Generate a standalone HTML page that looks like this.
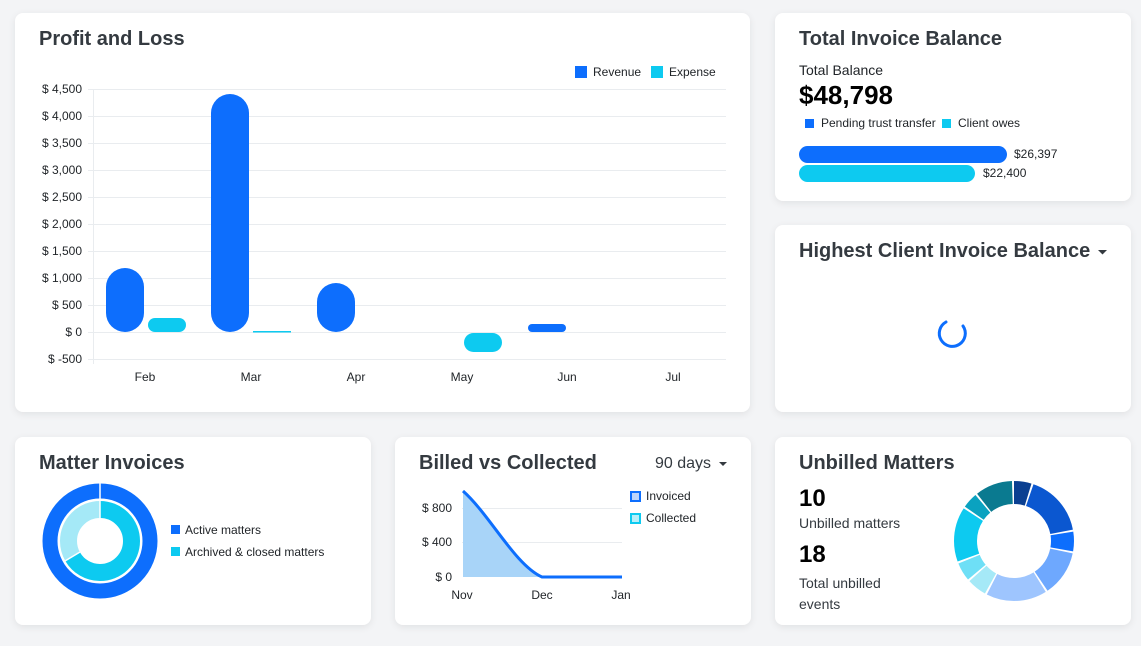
<!DOCTYPE html>
<html><head><meta charset="utf-8"><style>
*{margin:0;padding:0;box-sizing:border-box}
body{width:1141px;height:646px;background:#f3f4f6;font-family:"Liberation Sans",Arial,sans-serif;position:relative;overflow:hidden;color:#212529}
.card{position:absolute;background:#fff;border-radius:8px;box-shadow:0 2px 8px rgba(0,0,0,.08)}
.t{position:absolute;font-size:20px;font-weight:bold;color:#343a40}
svg{position:absolute;left:0;top:0}
.s{font-size:12px;fill:#212529}
</style></head><body>
<div class="card" style="left:15px;top:13px;width:735px;height:399px"></div>
<div class="card" style="left:775px;top:13px;width:356px;height:188px"></div>
<div class="card" style="left:775px;top:225px;width:356px;height:187px"></div>
<div class="card" style="left:15px;top:437px;width:356px;height:188px"></div>
<div class="card" style="left:395px;top:437px;width:356px;height:188px"></div>
<div class="card" style="left:775px;top:437px;width:356px;height:188px"></div>

<div class="t" style="left:39px;top:28px">Profit and Loss</div>
<div class="t" style="left:799px;top:28px">Total Invoice Balance</div>
<div class="t" style="left:799px;top:240px">Highest Client Invoice Balance</div>
<div class="t" style="left:39px;top:452px">Matter Invoices</div>
<div class="t" style="left:419px;top:452px">Billed vs Collected</div>
<div class="t" style="left:799px;top:452px">Unbilled Matters</div>
<div style="position:absolute;left:655px;top:455px;font-size:16px;color:#343a40">90 days</div>
<div style="position:absolute;left:799px;top:62px;font-size:14px">Total Balance</div>
<div style="position:absolute;left:799px;top:80px;font-size:26px;font-weight:bold;color:#000">$48,798</div>
<div style="position:absolute;left:799px;top:485px;font-size:24px;font-weight:bold;color:#000">10</div>
<div style="position:absolute;left:799px;top:515px;font-size:14px;color:#343a40">Unbilled matters</div>
<div style="position:absolute;left:799px;top:541px;font-size:24px;font-weight:bold;color:#000">18</div>
<div style="position:absolute;left:799px;top:573px;font-size:14px;color:#343a40;line-height:21px">Total unbilled<br>events</div>

<svg width="1141" height="646">
<g stroke="#e9ecef" stroke-width="1">
<line x1="88" y1="89.5" x2="726" y2="89.5"/><line x1="88" y1="116.5" x2="726" y2="116.5"/><line x1="88" y1="143.5" x2="726" y2="143.5"/><line x1="88" y1="170.5" x2="726" y2="170.5"/><line x1="88" y1="197.5" x2="726" y2="197.5"/><line x1="88" y1="224.5" x2="726" y2="224.5"/><line x1="88" y1="251.5" x2="726" y2="251.5"/><line x1="88" y1="278.5" x2="726" y2="278.5"/><line x1="88" y1="305.5" x2="726" y2="305.5"/><line x1="88" y1="332.5" x2="726" y2="332.5"/><line x1="88" y1="359.5" x2="726" y2="359.5"/><line x1="93.5" y1="89" x2="93.5" y2="364"/>
</g>
<g text-anchor="end">
<text x="82" y="93" class="s">$ 4,500</text><text x="82" y="120" class="s">$ 4,000</text><text x="82" y="147" class="s">$ 3,500</text><text x="82" y="174" class="s">$ 3,000</text><text x="82" y="201" class="s">$ 2,500</text><text x="82" y="228" class="s">$ 2,000</text><text x="82" y="255" class="s">$ 1,500</text><text x="82" y="282" class="s">$ 1,000</text><text x="82" y="309" class="s">$ 500</text><text x="82" y="336" class="s">$ 0</text><text x="82" y="363" class="s">$ -500</text>
</g>
<g text-anchor="middle"><text x="145" y="381" class="s">Feb</text><text x="251" y="381" class="s">Mar</text><text x="356" y="381" class="s">Apr</text><text x="462" y="381" class="s">May</text><text x="567" y="381" class="s">Jun</text><text x="673" y="381" class="s">Jul</text></g>
<rect x="106" y="268" width="38" height="64" rx="19" fill="#0d6efd"/>
<rect x="148" y="318" width="38" height="14" rx="7" fill="#0dcaf0"/>
<rect x="211" y="94" width="38" height="238" rx="19" fill="#0d6efd"/>
<rect x="253" y="331" width="38" height="1.5" fill="#0dcaf0"/>
<rect x="317" y="283" width="38" height="49" rx="19" fill="#0d6efd"/>
<rect x="464" y="333" width="38" height="19" rx="9.5" fill="#0dcaf0"/>
<rect x="528" y="324" width="38" height="8" rx="4" fill="#0d6efd"/>
<rect x="575" y="66" width="12" height="12" fill="#0d6efd"/><text x="593" y="76" class="s">Revenue</text>
<rect x="651" y="66" width="12" height="12" fill="#0dcaf0"/><text x="669" y="76" class="s">Expense</text>

<rect x="805" y="119" width="9" height="9" fill="#0d6efd"/><text x="821" y="127" class="s">Pending trust transfer</text>
<rect x="942" y="119" width="9" height="9" fill="#0dcaf0"/><text x="958" y="127" class="s">Client owes</text>
<rect x="799" y="146" width="208" height="17" rx="8.5" fill="#0d6efd"/><text x="1014" y="158" class="s">$26,397</text>
<rect x="799" y="165" width="176" height="17" rx="8.5" fill="#0dcaf0"/><text x="983" y="177" class="s">$22,400</text>

<path d="M1098 250 l9 0 l-4.5 4.5z" fill="#343a40"/>
<path d="M963 326 A13 13 0 1 1 946 322" fill="none" stroke="#0d6efd" stroke-width="3" stroke-linecap="round"/>
<path d="M719 462 l8 0 l-4 4z" fill="#343a40"/>

<circle cx="100" cy="541" r="50" fill="none" stroke="#0d6efd" stroke-width="15"/>
<line x1="100" y1="483" x2="100" y2="500" stroke="#fff" stroke-width="1.5"/>
<g transform="rotate(-90 100 541)">
<circle cx="100" cy="541" r="31.5" fill="none" stroke="#0dcaf0" stroke-width="17" pathLength="360" stroke-dasharray="240 360"/>
<circle cx="100" cy="541" r="31.5" fill="none" stroke="#a5e9f7" stroke-width="17" pathLength="360" stroke-dasharray="120 360" stroke-dashoffset="-240"/>
</g>
<line x1="100" y1="501" x2="100" y2="518" stroke="#fff" stroke-width="1.5"/>
<line x1="80" y1="552" x2="65" y2="561" stroke="#fff" stroke-width="1.5"/>
<rect x="171" y="525" width="9" height="9" fill="#0d6efd"/><text x="185" y="534" class="s">Active matters</text>
<rect x="171" y="547" width="9" height="9" fill="#0dcaf0"/><text x="185" y="556" class="s">Archived &amp; closed matters</text>

<line x1="462" y1="508.5" x2="622" y2="508.5" stroke="#e9ecef"/><line x1="462" y1="542.5" x2="622" y2="542.5" stroke="#e9ecef"/>
<path d="M463 491 C490 515 515 565 542 577 L542 577 L463 577 Z" fill="#a8d4f8"/>
<path d="M463 491 C490 515 515 565 542 577 L622 577" fill="none" stroke="#0d6efd" stroke-width="3"/>
<g text-anchor="end"><text x="452" y="512" class="s">$ 800</text><text x="452" y="546" class="s">$ 400</text><text x="452" y="581" class="s">$ 0</text></g>
<g text-anchor="middle"><text x="462" y="599" class="s">Nov</text><text x="542" y="599" class="s">Dec</text><text x="621" y="599" class="s">Jan</text></g>
<rect x="631" y="492" width="9" height="9" fill="#bcd4fb" stroke="#0d6efd" stroke-width="2"/><text x="646" y="500" class="s">Invoiced</text>
<rect x="631" y="514" width="9" height="9" fill="#b6effa" stroke="#0dcaf0" stroke-width="2"/><text x="646" y="522" class="s">Collected</text>

<g transform="rotate(-90 1014 541)" fill="none" stroke-width="23">
<circle cx="1014" cy="541" r="48.5" pathLength="360" stroke="#0a3f91" stroke-dasharray="17 343"/>
<circle cx="1014" cy="541" r="48.5" pathLength="360" stroke="#0b57d0" stroke-dasharray="60 300" stroke-dashoffset="-19"/>
<circle cx="1014" cy="541" r="48.5" pathLength="360" stroke="#0d6efd" stroke-dasharray="19 341" stroke-dashoffset="-81"/>
<circle cx="1014" cy="541" r="48.5" pathLength="360" stroke="#6ea8fe" stroke-dasharray="44 316" stroke-dashoffset="-102"/>
<circle cx="1014" cy="541" r="48.5" pathLength="360" stroke="#9ec5fe" stroke-dasharray="59 301" stroke-dashoffset="-148"/>
<circle cx="1014" cy="541" r="48.5" pathLength="360" stroke="#a5e9f7" stroke-dasharray="19 341" stroke-dashoffset="-209"/>
<circle cx="1014" cy="541" r="48.5" pathLength="360" stroke="#6edff6" stroke-dasharray="18 342" stroke-dashoffset="-230"/>
<circle cx="1014" cy="541" r="48.5" pathLength="360" stroke="#0dcaf0" stroke-dasharray="53 307" stroke-dashoffset="-250"/>
<circle cx="1014" cy="541" r="48.5" pathLength="360" stroke="#0aa2c0" stroke-dasharray="15 345" stroke-dashoffset="-305"/>
<circle cx="1014" cy="541" r="48.5" pathLength="360" stroke="#0a7a90" stroke-dasharray="36 324" stroke-dashoffset="-322"/>
</g>
</svg>
</body></html>
